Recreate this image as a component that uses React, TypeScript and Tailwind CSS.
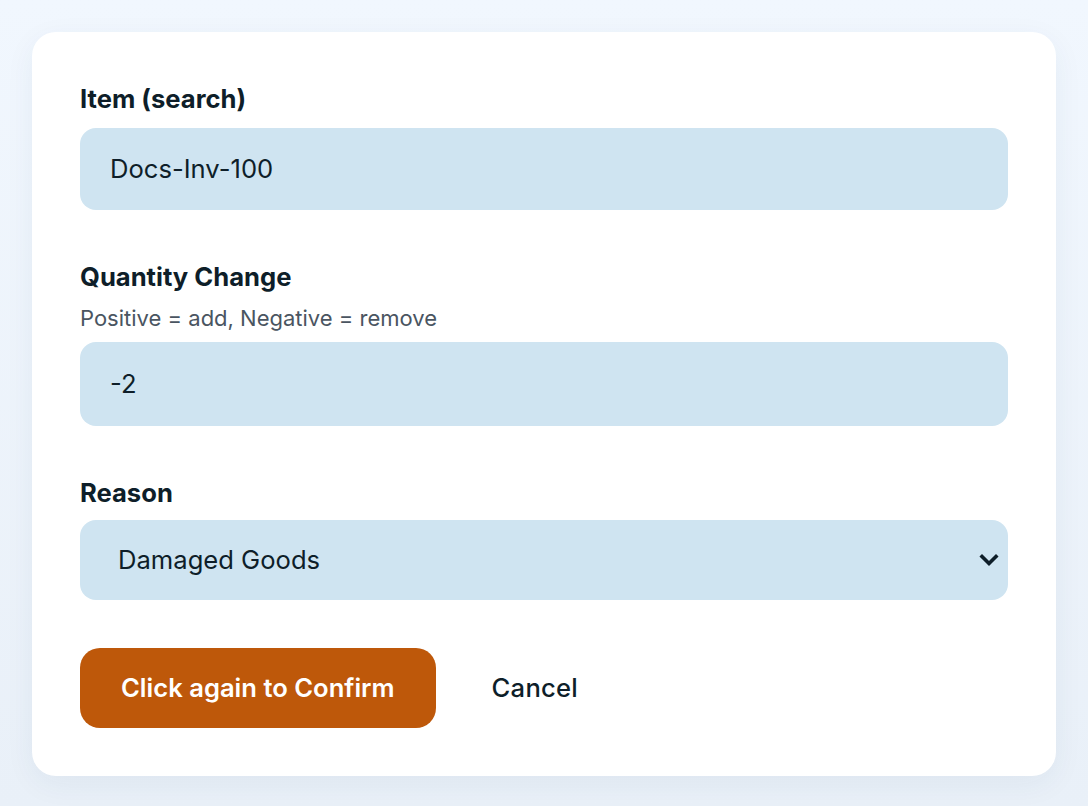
export default function App() {
  return (
    <div className="min-h-screen bg-gradient-to-b from-[#f1f7fe] to-[#e9f0f8] px-8 py-8 font-['Inter',sans-serif] text-[#0e1e29]">
      <div className="rounded-[24px] bg-white px-12 py-12 shadow-[0_8px_30px_rgba(30,60,100,0.06)]">
        {/* Item */}
        <label className="block text-[25.6px] font-bold leading-[38px]">Item (search)</label>
        <div className="mt-[10px] flex h-[82px] items-center rounded-[16px] bg-[#cfe4f1] px-[30px] text-[25.6px]">
          Docs-Inv-100
        </div>

        {/* Quantity */}
        <label className="mt-12 block text-[25.6px] font-bold leading-[38px]">Quantity Change</label>
        <p className="mt-[5px] text-[22px] leading-[34px] text-[#4a5561]">Positive = add, Negative = remove</p>
        <div className="mt-[7px] flex h-[84px] items-center rounded-[16px] bg-[#cfe4f1] px-[30px] text-[25.6px]">
          -2
        </div>

        {/* Reason */}
        <label className="mt-12 block text-[25.6px] font-bold leading-[38px]">Reason</label>
        <div className="mt-2 flex h-[80px] items-center justify-between rounded-[16px] bg-[#cfe4f1] pl-[38px] pr-[9px] text-[25.6px]">
          <span>Damaged Goods</span>
          <svg width="20" height="14" viewBox="0 0 20 14" fill="none" stroke="#0e1e29" strokeWidth="3.6" strokeLinecap="square">
            <path d="M3 3.5l7 7 7-7" />
          </svg>
        </div>

        {/* Actions */}
        <div className="mt-12 flex items-center gap-4">
          <button className="h-[80px] rounded-[20px] bg-[#be580a] px-[41px] text-[25.6px] font-semibold text-white">
            Click again to Confirm
          </button>
          <button className="h-[80px] px-10 text-[25.6px] font-medium tracking-[0.01em] text-[#0e1e29]">Cancel</button>
        </div>
      </div>
    </div>
  );
}
